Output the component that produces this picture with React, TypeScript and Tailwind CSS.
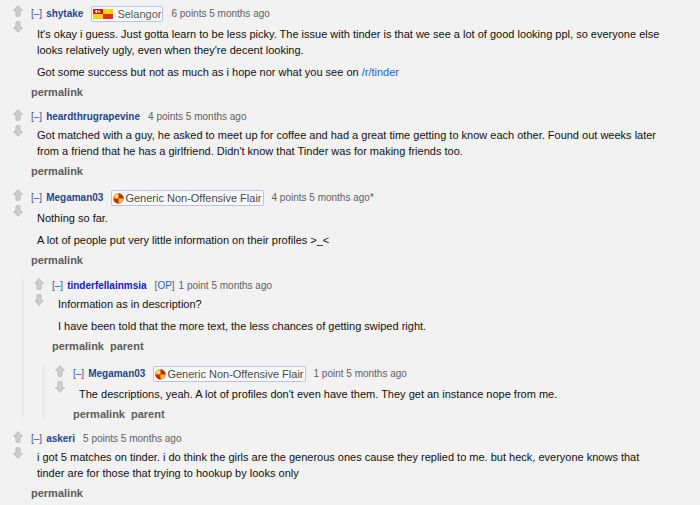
import { Fragment, useState } from "react";
import type { ReactNode } from "react";

type Flair = "selangor" | "generic";

interface CommentData {
  id: string;
  author: string;
  op?: boolean;
  flair?: Flair;
  meta: string;
  body: ReactNode[];
  replies?: CommentData[];
}

const comments: CommentData[] = [
  {
    id: "c1",
    author: "shytake",
    flair: "selangor",
    meta: "6 points 5 months ago",
    body: [
      "It's okay i guess. Just gotta learn to be less picky. The issue with tinder is that we see a lot of good looking ppl, so everyone else looks relatively ugly, even when they're decent looking.",
      <Fragment key="t">
        Got some success but not as much as i hope nor what you see on{" "}
        <a href="#tinder" className="text-[#2361cf]">/r/tinder</a>
      </Fragment>,
    ],
  },
  {
    id: "c2",
    author: "heardthrugrapevine",
    meta: "4 points 5 months ago",
    body: [
      "Got matched with a guy, he asked to meet up for coffee and had a great time getting to know each other. Found out weeks later from a friend that he has a girlfriend. Didn't know that Tinder was for making friends too.",
    ],
  },
  {
    id: "c3",
    author: "Megaman03",
    flair: "generic",
    meta: "4 points 5 months ago*",
    body: ["Nothing so far.", "A lot of people put very little information on their profiles >_<"],
    replies: [
      {
        id: "c4",
        author: "tinderfellainmsia",
        op: true,
        meta: "1 point 5 months ago",
        body: [
          "Information as in description?",
          "I have been told that the more text, the less chances of getting swiped right.",
        ],
        replies: [
          {
            id: "c5",
            author: "Megaman03",
            flair: "generic",
            meta: "1 point 5 months ago",
            body: [
              "The descriptions, yeah. A lot of profiles don't even have them. They get an instance nope from me.",
            ],
          },
        ],
      },
    ],
  },
  {
    id: "c6",
    author: "askeri",
    meta: "5 points 5 months ago",
    body: [
      "i got 5 matches on tinder. i do think the girls are the generous ones cause they replied to me. but heck, everyone knows that tinder are for those that trying to hookup by looks only",
    ],
  },
];

function Arrow({ down }: { down?: boolean }) {
  return (
    <button type="button" aria-label={down ? "downvote" : "upvote"} className="block">
      <svg width="10" height="12" viewBox="0 0 10 12" className={down ? "rotate-180" : ""}>
        <path
          d="M5 0.6 L9.5 5.4 H7.1 V10.6 Q7.1 11.3 6.4 11.3 H3.6 Q2.9 11.3 2.9 10.6 V5.4 H0.5 Z"
          fill="#cecece"
          stroke="#b8b8b8"
          strokeWidth="0.8"
          strokeLinejoin="round"
        />
      </svg>
    </button>
  );
}

function SelangorFlag() {
  return (
    <svg width="20" height="10" viewBox="0 0 20 10" aria-hidden="true">
      <rect width="20" height="10" fill="#fbd40c" />
      <rect width="10" height="5" fill="#dd1414" />
      <rect x="10" y="5" width="10" height="5" fill="#e0301c" />
      <path d="M4.6 1.1 A1.6 1.6 0 1 0 4.6 3.9 A1.9 1.9 0 0 1 4.6 1.1 Z" fill="#fff" />
      <path d="M6 1.2 L6.4 2.1 L7.4 2.2 L6.6 2.9 L6.9 3.8 L6 3.3 L5.1 3.8 L5.4 2.9 L4.7 2.2 L5.6 2.1 Z" fill="#fff" />
    </svg>
  );
}

function GenericBadge() {
  return (
    <svg width="11" height="11" viewBox="0 0 11 11" aria-hidden="true">
      <circle cx="5.5" cy="5.5" r="5" fill="#f6c90e" />
      <path d="M5.5 5.5 V0.5 A5 5 0 0 1 10.5 5.5 Z" fill="#d3201a" />
      <path d="M5.5 5.5 V10.5 A5 5 0 0 1 0.5 5.5 Z" fill="#d3201a" />
      <path d="M1.6 3 L4.5 1.2 L5.5 3.6 L3.4 4.8 Z" fill="#fdf08a" />
      <circle cx="5.5" cy="5.5" r="4.9" fill="none" stroke="#6b3812" strokeOpacity="0.55" strokeWidth="0.7" />
    </svg>
  );
}

function FlairTag({ flair }: { flair: Flair }) {
  return flair === "selangor" ? (
    <span className="ml-2 flex h-4 items-center gap-1 rounded-[2px] border border-[#b4c4ea] bg-[#fbfbfd] px-px text-[11px] text-[#545454]">
      <SelangorFlag />
      Selangor
    </span>
  ) : (
    <span className="ml-2 flex h-4 items-center gap-px rounded-[2px] border border-[#b4c4ea] bg-[#fbfbfd] px-px text-[11px] text-[#484848]">
      <GenericBadge />
      Generic Non-Offensive Flair
    </span>
  );
}

function Comment({ data, nested }: { data: CommentData; nested?: boolean }) {
  const [open, setOpen] = useState(true);
  return (
    <li>
      <article className="flex gap-2 pl-[11px]">
        <div className={data.flair ? "flex flex-col gap-1 pt-px" : "flex flex-col gap-1"}>
          <Arrow />
          <Arrow down />
        </div>
        <div className="min-w-0 flex-1">
          <header
            className={data.flair ? "flex h-5 items-center text-[10px]" : "flex h-4 items-center text-[10px]"}
          >
            <button type="button" onClick={() => setOpen(!open)} className="text-[#3b5a9a]">
              {open ? "[–]" : "[+]"}
            </button>
            <a
              href={"#" + data.author}
              className={data.op ? "ml-1 font-bold text-[#1616cc]" : "ml-1 font-bold text-[#26468c]"}
            >
              {data.author}
            </a>
            {data.op && (
              <span className="ml-2 text-[#56616e]">
                [<a href="#op" className="text-[#2b62b0]">OP</a>]
              </span>
            )}
            {data.flair && <FlairTag flair={data.flair} />}
            <span className={data.op ? "ml-1 text-[#616161]" : "ml-2 text-[#616161]"}>{data.meta}</span>
          </header>
          {open && (
            <>
              <div className="mt-[2px] flex flex-col gap-[6px] pl-[6px] text-[#101010]">
                {data.body.map((p, i) => (
                  <p key={i}>{p}</p>
                ))}
              </div>
              <nav className="mt-1 flex gap-[6px] font-bold text-[#5c5c5c]">
                <a href={"#" + data.id}>permalink</a>
                {nested && <a href="#parent">parent</a>}
              </nav>
            </>
          )}
        </div>
      </article>
      {open && data.replies && (
        <ul className="mt-2 ml-5 border-l border-[#e3e5f0] pt-[2px]">
          {data.replies.map((r) => (
            <Comment key={r.id} data={r} nested />
          ))}
        </ul>
      )}
    </li>
  );
}

export default function App() {
  return (
    <main className="min-h-screen bg-[#f2f2f2] pt-1 pr-8 pl-[2px] font-['Liberation_Sans',Arial,sans-serif] text-[11px] leading-4">
      <ul className="flex flex-col gap-[9px]">
        {comments.map((c) => (
          <Comment key={c.id} data={c} />
        ))}
      </ul>
    </main>
  );
}
